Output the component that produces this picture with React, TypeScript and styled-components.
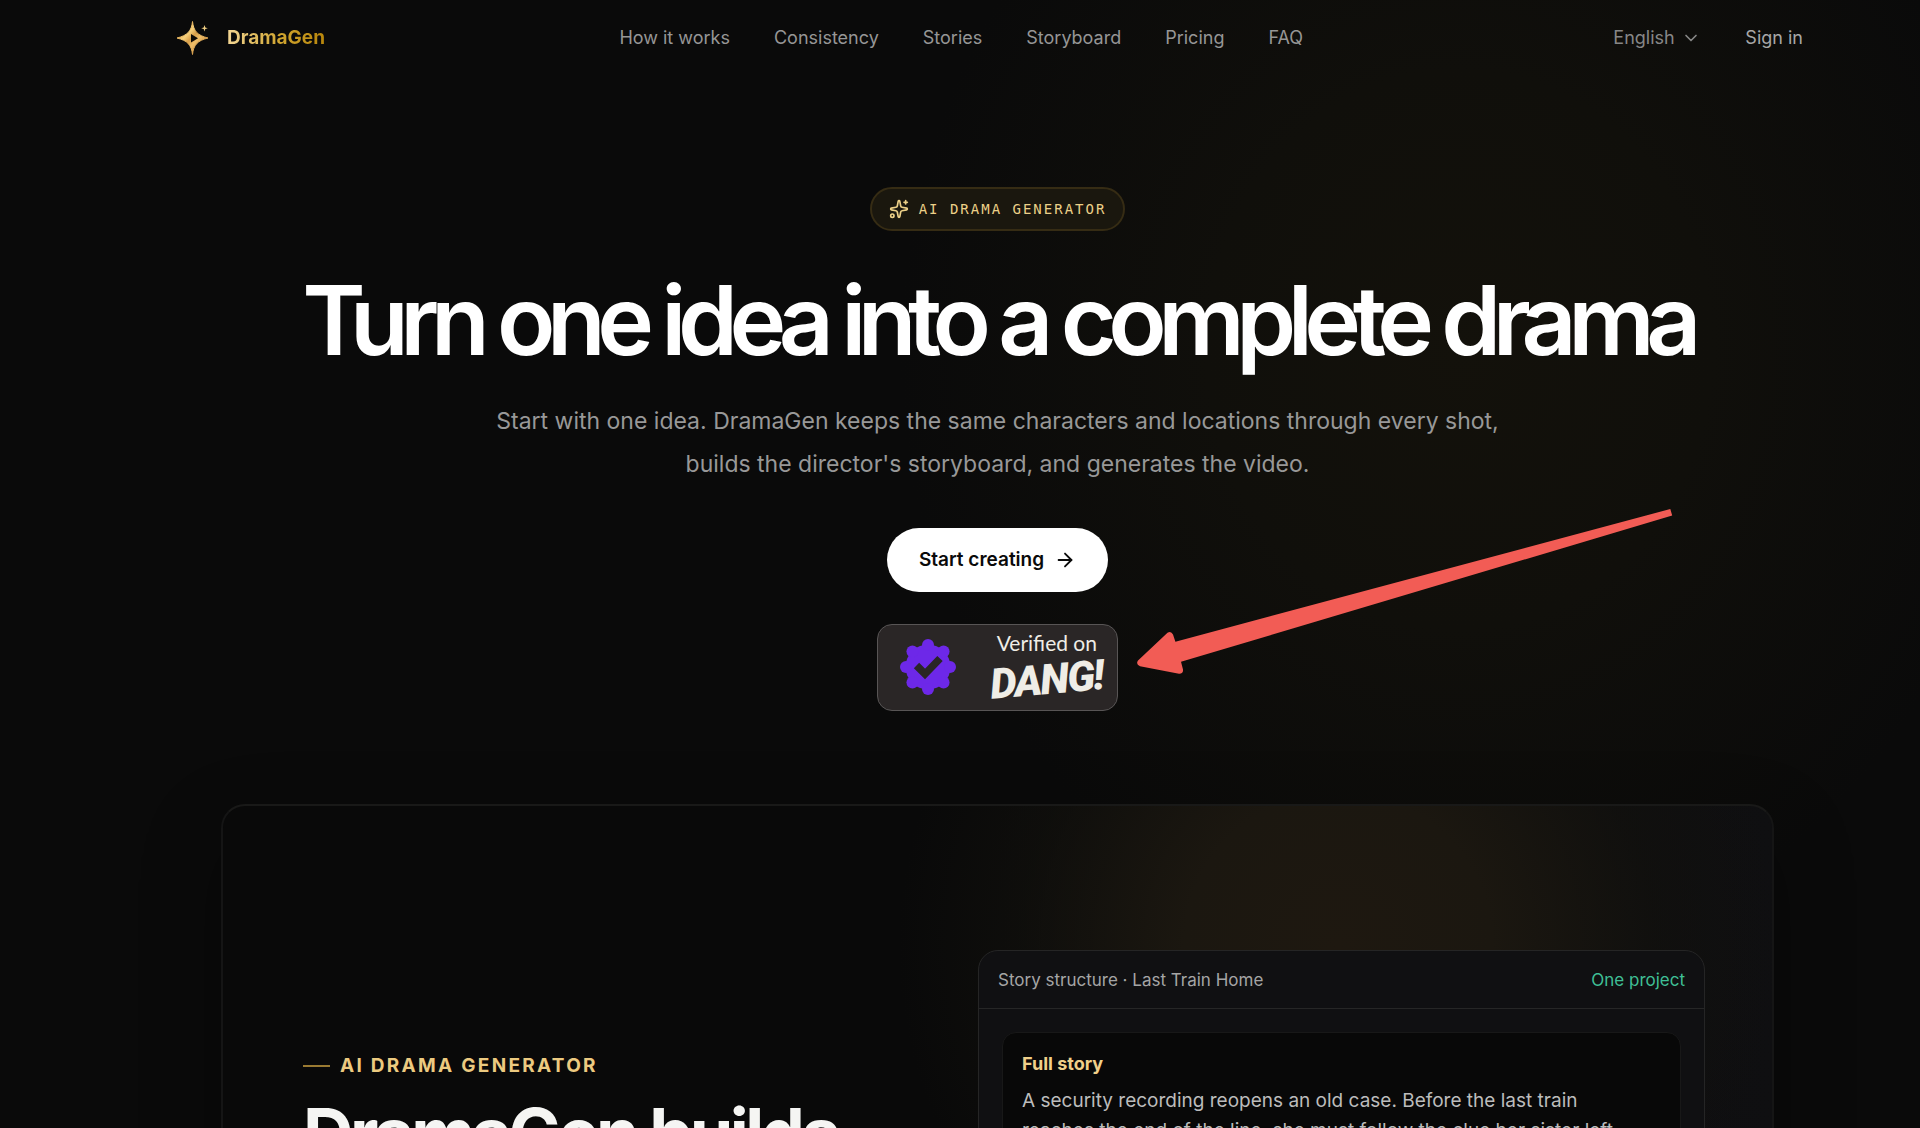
import React from "react";
import styled, { createGlobalStyle } from "styled-components";
import { ArrowRight, ChevronDown, Sparkles } from "lucide-react";

const sans = `Inter, "Liberation Sans", sans-serif`;

const GlobalStyle = createGlobalStyle`
  *, *::before, *::after { box-sizing: border-box; }
  body { margin: 0; background: #0a0a0a; color: #fff; font-family: ${sans}; }
  a { color: inherit; text-decoration: none; }
  h1, h2, h3, p { margin: 0; }
`;

const Page = styled.div`
  height: 100vh;
  overflow: hidden;
  padding-left: 75px;
  background:
    radial-gradient(ellipse 560px 620px at 76% 31%, #13110b 0%, #100f0b 45%, #0a0a0a 100%),
    #0a0a0a;
`;

const Header = styled.header`
  display: flex;
  align-items: center;
  justify-content: space-between;
  max-width: 1655px;
  height: 75px;
  margin: 0 auto;
  font-size: 18px;
  line-height: 28px;
`;

const Brand = styled.a`
  display: flex;
  align-items: center;
  gap: 13px;
`;

const BrandName = styled.span`
  font-size: 19px;
  font-weight: 700;
  background: linear-gradient(90deg, #f3d694 0%, #cfa42e 55%, #b8860b 100%);
  background-clip: text;
  color: transparent;
`;

const Nav = styled.nav`
  display: flex;
  gap: 44px;
  color: #969696;
`;

const Actions = styled.div`
  display: flex;
  align-items: center;
  gap: 28px;
  padding-left: 16px;
`;

const Language = styled.label`
  display: flex;
  align-items: center;
  gap: 6px;
  color: #878787;
`;

const LanguageSelect = styled.select`
  appearance: none;
  border: 0;
  padding: 0;
  background: none;
  color: inherit;
  font: inherit;
`;

const SignIn = styled.a`
  padding: 0 22px 0 16px;
  color: #a8a8a8;
`;

const Hero = styled.section`
  display: flex;
  flex-direction: column;
  align-items: center;
  padding-top: 112px;
  text-align: center;
`;

const Pill = styled.div`
  display: flex;
  align-items: center;
  gap: 10px;
  height: 44px;
  padding: 0 17px;
  border: 2px solid #362c14;
  border-radius: 22px;
  background: #1a170e;
  color: #ecd088;
  font-family: "DejaVu Sans Mono", monospace;
  font-size: 14px;
  letter-spacing: 2px;
`;

const Title = styled.h1`
  margin-top: 41px;
  font-size: 96px;
  line-height: 96px;
  font-weight: 600;
  letter-spacing: -0.088em;
`;

const Lead = styled.p`
  max-width: 1040px;
  margin-top: 32px;
  color: #989898;
  font-size: 23px;
  line-height: 43px;
`;

const StartButton = styled.button`
  display: flex;
  align-items: center;
  gap: 10px;
  height: 64px;
  margin-top: 42px;
  padding: 0 32px;
  border: 0;
  border-radius: 32px;
  background: #fff;
  color: #0a0a0a;
  font: 600 19px/28px ${sans};
`;

const BadgeSpot = styled.div`
  position: relative;
  margin-top: 32px;
`;

const Badge = styled.a`
  display: flex;
  align-items: flex-start;
  justify-content: space-between;
  width: 241px;
  height: 87px;
  padding: 5px 14px 0 21px;
  border: 1px solid #585555;
  border-radius: 15px;
  background: #2a2626;
  color: #efede6;
`;

const SealIcon = styled.svg`
  margin-top: 8px;
`;

const BadgeText = styled.span`
  display: flex;
  flex-direction: column;
  align-items: flex-end;
  font-family: Lato, sans-serif;
  font-size: 21px;
  line-height: 26px;
`;

const BadgeLead = styled.span`
  padding-right: 6px;
`;

const BadgeName = styled.strong`
  font-family: Roboto, sans-serif;
  font-size: 42px;
  line-height: 48px;
  font-weight: 900;
  font-style: italic;
  letter-spacing: -0.04em;
  transform: rotate(-5deg);
`;

const Pointer = styled.svg`
  position: absolute;
  left: calc(100% + 17px);
  top: -120px;
  pointer-events: none;
`;

const Showcase = styled.section`
  display: grid;
  grid-template-columns: 1fr 727px;
  align-items: start;
  max-width: 1553px;
  height: 640px;
  margin: 93px auto 0;
  padding: 144px 67px 0 80px;
  border: 2px solid #151515;
  border-top-color: #191918;
  border-radius: 24px;
  background:
    radial-gradient(ellipse 440px 440px at 72% 22%, #1e1810 0%, #1b1710 35%, rgba(18, 17, 13, 0.6) 72%, rgba(10, 10, 10, 0) 100%),
    linear-gradient(90deg, #090909 0%, #090909 50%, #0f0f11 100%);
  box-shadow: 0 30px 80px rgba(0, 0, 0, 0.3);
`;

const Copy = styled.div`
  padding-top: 102px;
`;

const Eyebrow = styled.p`
  display: flex;
  align-items: center;
  gap: 10px;
  color: #ecca80;
  font-size: 19px;
  line-height: 28px;
  font-weight: 700;
  letter-spacing: 0.12em;

  &::before {
    content: "";
    width: 27px;
    height: 2px;
    background: #9a7a32;
  }
`;

const CopyTitle = styled.h2`
  margin-top: 18px;
  color: #f5f5f3;
  font-size: 70px;
  line-height: 72px;
  font-weight: 700;
  letter-spacing: -0.05em;
`;

const Panel = styled.article`
  height: 520px;
  border: 1px solid #252525;
  border-radius: 20px;
  background: #101012;
`;

const PanelHead = styled.header`
  display: flex;
  align-items: center;
  justify-content: space-between;
  height: 58px;
  padding: 0 19px;
  border-bottom: 1px solid #262626;
  color: #a5a5a5;
  font-size: 17px;
`;

const Status = styled.span`
  color: #3fbf95;
`;

const Story = styled.div`
  height: 300px;
  margin: 23px;
  padding: 16px 19px;
  border: 1px solid #181818;
  border-radius: 14px;
  background: #080808;
`;

const StoryTitle = styled.h3`
  color: #f0d08a;
  font-size: 18px;
  line-height: 30px;
  font-weight: 700;
`;

const StoryText = styled.p`
  margin-top: 7px;
  color: #bcbcbc;
  font-size: 19px;
  line-height: 30px;
`;

function LogoMark() {
  return (
    <svg width="44" height="44" viewBox="0 0 44 44" aria-hidden="true">
      <defs>
        <linearGradient id="gold" x1="0" y1="0" x2="1" y2="1">
          <stop offset="0.1" stopColor="#c9862f" />
          <stop offset="0.36" stopColor="#f6cf7a" />
          <stop offset="0.48" stopColor="#d9a04a" />
          <stop offset="0.6" stopColor="#f0be68" />
          <stop offset="1" stopColor="#a8641c" />
        </linearGradient>
      </defs>
      <path
        d="M22.500 5.500C23.500 15 27.500 19.500 38 22C27.500 24.500 23.500 29 22.500 38.500C21.500 29 17.500 24.500 7 22C17.500 19.500 21.500 15 22.500 5.500Z"
        fill="url(#gold)"
        stroke="url(#gold)"
      />
      <path d="M21 18v8.500l7-4.200z" fill="#0d0a06" />
      <path d="M34.500 9l.8 2.500 2.500.8-2.500.8-.8 2.500-.8-2.500-2.500-.8 2.500-.8z" fill="#f0cf83" />
    </svg>
  );
}

function Seal() {
  const bumps = Array.from({ length: 8 }, (_, i) => {
    const a = (i * Math.PI) / 4;
    return <circle key={i} cx={29 + 22 * Math.cos(a)} cy={29 + 22 * Math.sin(a)} r="6" />;
  });
  return (
    <SealIcon width="58" height="58" viewBox="0 0 58 58" fill="#6d28e8" aria-hidden="true">
      <circle cx="29" cy="29" r="22.500" />
      {bumps}
      <path d="M17.500 27.500L26 36L41 20.500" fill="none" stroke="#2a2626" strokeWidth="7.500" />
    </SealIcon>
  );
}

const links = ["How it works", "Consistency", "Stories", "Storyboard", "Pricing", "FAQ"];

export default function App() {
  return (
    <Page>
      <GlobalStyle />
      <Header>
        <Brand href="#">
          <LogoMark />
          <BrandName>DramaGen</BrandName>
        </Brand>
        <Nav>
          {links.map((label) => (
            <a key={label} href="#">{label}</a>
          ))}
        </Nav>
        <Actions>
          <Language>
            <LanguageSelect aria-label="Language">
              <option>English</option>
            </LanguageSelect>
            <ChevronDown size={20} strokeWidth={2} />
          </Language>
          <SignIn href="#">Sign in</SignIn>
        </Actions>
      </Header>

      <main>
        <Hero>
          <Pill>
            <Sparkles size={20} />
            <span>AI DRAMA GENERATOR</span>
          </Pill>
          <Title>Turn one idea into a complete drama</Title>
          <Lead>
            Start with one idea. DramaGen keeps the same characters and locations through every shot,
            builds the director's storyboard, and generates the video.
          </Lead>
          <StartButton type="button">
            Start creating
            <ArrowRight size={22} />
          </StartButton>
          <BadgeSpot>
            <Badge href="#">
              <Seal />
              <BadgeText>
                <BadgeLead>Verified on</BadgeLead>
                <BadgeName>DANG!</BadgeName>
              </BadgeText>
            </Badge>
            <Pointer width="542" height="174" viewBox="1135 504 542 174" aria-hidden="true">
              <path
                d="M1670.300 509L1672.200 515.600L1181 661.700L1183 669.500Q1183.500 674 1179 673.800L1140 666.300Q1135.500 664.500 1138 660.500L1167.500 632.800Q1171 630.500 1173 634.500L1175.400 641.700Z"
                fill="#f25c55"
              />
            </Pointer>
          </BadgeSpot>
        </Hero>

        <Showcase>
          <Copy>
            <Eyebrow>AI DRAMA GENERATOR</Eyebrow>
            <CopyTitle>DramaGen builds</CopyTitle>
          </Copy>
          <Panel>
            <PanelHead>
              <span>Story structure · Last Train Home</span>
              <Status>One project</Status>
            </PanelHead>
            <Story>
              <StoryTitle>Full story</StoryTitle>
              <StoryText>
                A security recording reopens an old case. Before the last train
                <br />
                reaches the end of the line, she must follow the clue her sister left
              </StoryText>
            </Story>
          </Panel>
        </Showcase>
      </main>
    </Page>
  );
}
